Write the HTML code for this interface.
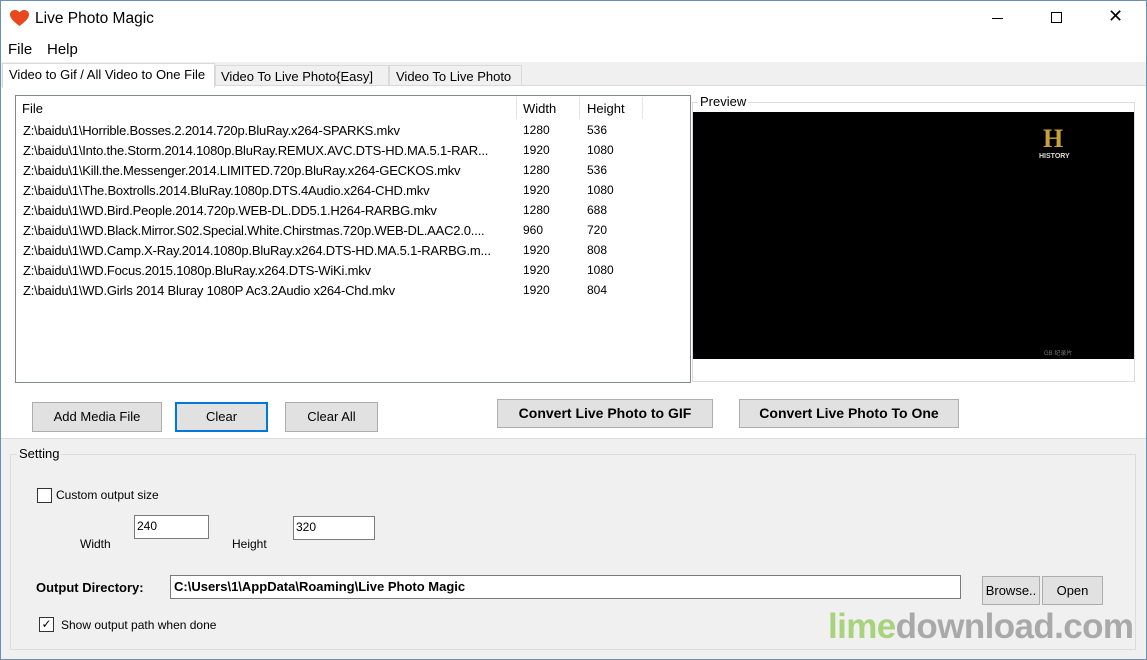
<!DOCTYPE html>
<html><head><style>
*{box-sizing:border-box;margin:0;padding:0}
body{width:1147px;height:660px;overflow:hidden;background:#fff;font-family:"Liberation Sans",sans-serif;font-size:13px;color:#000;position:relative}
.a{position:absolute}
.btn{position:absolute;background:#e1e1e1;border:1px solid #adadad;text-align:center;font-size:13px}
.row{position:absolute;left:23px;font-size:13px;letter-spacing:-0.2px;white-space:nowrap}
.w{position:absolute;left:523px;font-size:12px}
.h{position:absolute;left:587px;font-size:12px}
</style></head><body>
<div class="a" style="left:0;top:0;width:1147px;height:660px;border:1px solid #6d8fb0"></div>
<svg class="a" style="left:10px;top:10px" width="19" height="17" viewBox="0 0 19 17"><path d="M9.5 16 C3 11 0 8 0 4.5 0 1.5 2.5 0 5 0 7 0 8.5 1 9.5 2.5 10.5 1 12 0 14 0 16.5 0 19 1.5 19 4.5 19 8 16 11 9.5 16Z" fill="#e8481e"/></svg>
<div class="a" style="left:35px;top:10px;font-size:15.5px">Live Photo Magic</div>
<div class="a" style="left:992px;top:18px;width:11px;height:1px;background:#000"></div>
<div class="a" style="left:1051px;top:12px;width:11px;height:11px;border:1px solid #000"></div>
<div class="a" style="left:1108px;top:6px;font-size:18px;font-weight:300">✕</div>
<div class="a" style="left:8px;top:41px;font-size:15px">File</div>
<div class="a" style="left:47px;top:41px;font-size:15px">Help</div>
<div class="a" style="left:1px;top:62px;width:1145px;height:24px;background:#f0f0f0;border-bottom:1px solid #d9d9d9"></div>
<div class="a" style="left:2px;top:63px;width:213px;height:25px;background:#fff;border:1px solid #d9d9d9;border-bottom:none;padding:3px 0 0 6px">Video to Gif / All Video to One File</div>
<div class="a" style="left:215px;top:65px;width:174px;height:21px;border:1px solid #d9d9d9;padding:3px 0 0 5px">Video To Live Photo{Easy]</div>
<div class="a" style="left:389px;top:65px;width:133px;height:21px;border:1px solid #d9d9d9;padding:3px 0 0 6px">Video To Live Photo</div>
<div class="a" style="left:15px;top:95px;width:676px;height:288px;border:1px solid #828790;background:#fff"></div>
<div class="a" style="left:22px;top:101px">File</div>
<div class="a" style="left:516px;top:97px;width:1px;height:22px;background:#e5e5e5"></div>
<div class="a" style="left:523px;top:101px">Width</div>
<div class="a" style="left:579px;top:97px;width:1px;height:22px;background:#e5e5e5"></div>
<div class="a" style="left:587px;top:101px">Height</div>
<div class="a" style="left:642px;top:97px;width:1px;height:22px;background:#e5e5e5"></div>
<div class="row" style="top:123px">Z:\baidu\1\Horrible.Bosses.2.2014.720p.BluRay.x264-SPARKS.mkv</div><div class="w" style="top:123px">1280</div><div class="h" style="top:123px">536</div>
<div class="row" style="top:143px">Z:\baidu\1\Into.the.Storm.2014.1080p.BluRay.REMUX.AVC.DTS-HD.MA.5.1-RAR...</div><div class="w" style="top:143px">1920</div><div class="h" style="top:143px">1080</div>
<div class="row" style="top:163px">Z:\baidu\1\Kill.the.Messenger.2014.LIMITED.720p.BluRay.x264-GECKOS.mkv</div><div class="w" style="top:163px">1280</div><div class="h" style="top:163px">536</div>
<div class="row" style="top:183px">Z:\baidu\1\The.Boxtrolls.2014.BluRay.1080p.DTS.4Audio.x264-CHD.mkv</div><div class="w" style="top:183px">1920</div><div class="h" style="top:183px">1080</div>
<div class="row" style="top:203px">Z:\baidu\1\WD.Bird.People.2014.720p.WEB-DL.DD5.1.H264-RARBG.mkv</div><div class="w" style="top:203px">1280</div><div class="h" style="top:203px">688</div>
<div class="row" style="top:223px">Z:\baidu\1\WD.Black.Mirror.S02.Special.White.Chirstmas.720p.WEB-DL.AAC2.0....</div><div class="w" style="top:223px">960</div><div class="h" style="top:223px">720</div>
<div class="row" style="top:243px">Z:\baidu\1\WD.Camp.X-Ray.2014.1080p.BluRay.x264.DTS-HD.MA.5.1-RARBG.m...</div><div class="w" style="top:243px">1920</div><div class="h" style="top:243px">808</div>
<div class="row" style="top:263px">Z:\baidu\1\WD.Focus.2015.1080p.BluRay.x264.DTS-WiKi.mkv</div><div class="w" style="top:263px">1920</div><div class="h" style="top:263px">1080</div>
<div class="row" style="top:283px">Z:\baidu\1\WD.Girls 2014 Bluray 1080P Ac3.2Audio x264-Chd.mkv</div><div class="w" style="top:283px">1920</div><div class="h" style="top:283px">804</div>
<div class="a" style="left:692px;top:102px;width:443px;height:280px;border:1px solid #dcdcdc"></div>
<div class="a" style="left:698px;top:94px;background:#fff;padding:0 2px">Preview</div>
<div class="a" style="left:693px;top:112px;width:441px;height:247px;background:#000"></div>
<div class="a" style="left:1043px;top:124px;color:#c9a13a;font-family:'Liberation Serif',serif;font-weight:bold;font-size:26px">H</div>
<div class="a" style="left:1039px;top:153px;color:#ddd;font-size:7px;font-weight:bold">HISTORY</div>
<div class="a" style="left:1044px;top:348px;color:#777;font-size:6px">GB 纪录片</div>
<div class="btn" style="left:32px;top:402px;width:130px;height:30px;line-height:28px">Add Media File</div>
<div class="btn" style="left:175px;top:402px;width:93px;height:30px;line-height:26px;border:2px solid #0078d7">Clear</div>
<div class="btn" style="left:285px;top:402px;width:93px;height:30px;line-height:28px">Clear All</div>
<div class="btn" style="left:497px;top:399px;width:216px;height:29px;line-height:27px;font-weight:bold;font-size:14px">Convert Live Photo to GIF</div>
<div class="btn" style="left:739px;top:399px;width:220px;height:29px;line-height:27px;font-weight:bold;font-size:14px">Convert Live Photo To One</div>
<div class="a" style="left:1px;top:438px;width:1145px;height:221px;background:#f0f0f0;border-top:1px solid #ddd"></div>
<div class="a" style="left:10px;top:454px;width:1126px;height:196px;border:1px solid #dcdcdc"></div>
<div class="a" style="left:17px;top:446px;background:#f0f0f0;padding:0 2px;font-size:13px">Setting</div>
<div class="a" style="left:37px;top:488px;width:15px;height:15px;border:1px solid #333;background:#fff"></div>
<div class="a" style="left:56px;top:488px;font-size:12px">Custom output size</div>
<div class="a" style="left:134px;top:515px;width:75px;height:24px;border:1px solid #7a7a7a;background:#fff;padding:3px 0 0 2px;font-size:12px">240</div>
<div class="a" style="left:293px;top:516px;width:82px;height:24px;border:1px solid #7a7a7a;background:#fff;padding:3px 0 0 2px;font-size:12px">320</div>
<div class="a" style="left:80px;top:537px;font-size:12px">Width</div>
<div class="a" style="left:232px;top:537px;font-size:12px">Height</div>
<div class="a" style="left:36px;top:580px;font-size:13px;font-weight:bold">Output Directory:</div>
<div class="a" style="left:170px;top:575px;width:791px;height:24px;border:1px solid #7a7a7a;background:#fff;padding:3px 0 0 3px;font-size:13px;font-weight:bold">C:\Users\1\AppData\Roaming\Live Photo Magic</div>
<div class="btn" style="left:982px;top:576px;width:58px;height:29px;line-height:27px">Browse..</div>
<div class="btn" style="left:1042px;top:576px;width:61px;height:29px;line-height:27px">Open</div>
<div class="a" style="left:39px;top:617px;width:15px;height:15px;border:1px solid #333;background:#fff;font-size:12px;line-height:13px;text-align:center">✓</div>
<div class="a" style="left:61px;top:618px;font-size:12px">Show output path when done</div>
<div class="a" style="left:828px;top:607px;font-size:35px;font-weight:bold;letter-spacing:-0.6px"><span style="color:#a8d27c">lime</span><span style="color:#a9a9a9">download.com</span></div>
</body></html>
